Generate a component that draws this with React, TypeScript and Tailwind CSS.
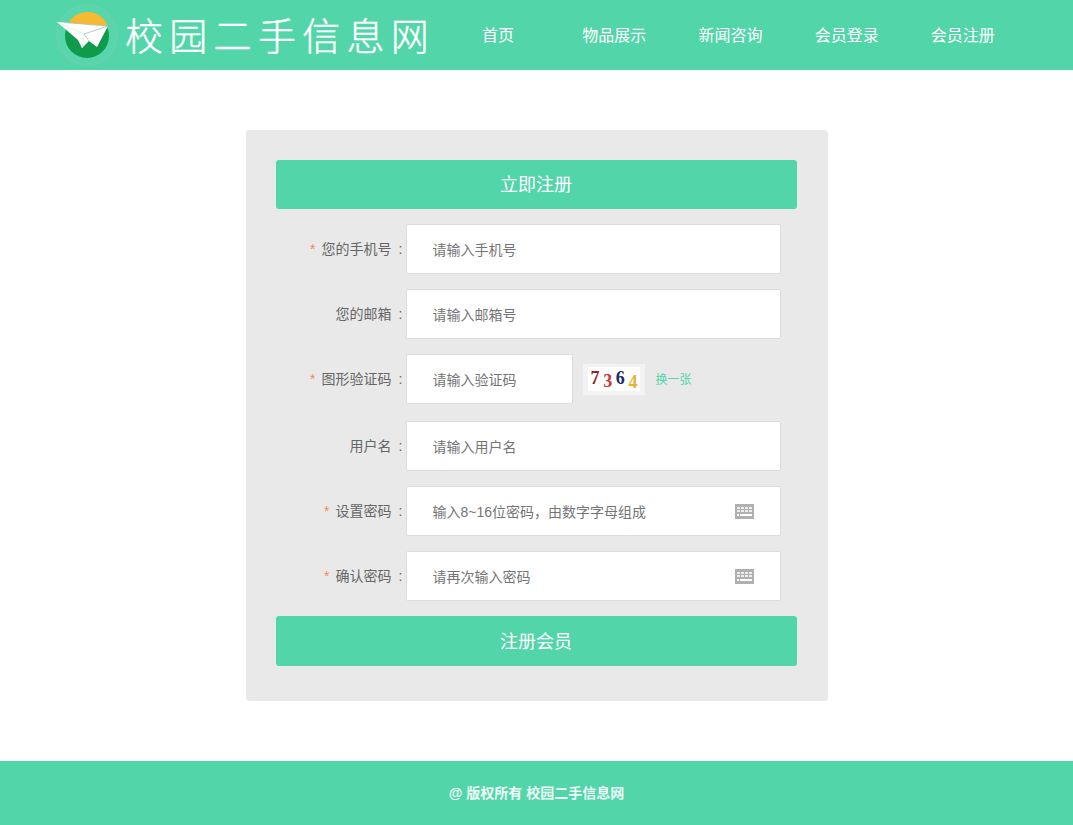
const cjk = "font-['Liberation_Sans','Noto_Sans_CJK_SC',sans-serif]";

const navItems = ["首页", "物品展示", "新闻咨询", "会员登录", "会员注册"];

function Logo() {
  return (
    <svg width="64" height="64" viewBox="0 0 64 64" className="shrink-0">
      <circle cx="33" cy="32" r="30" fill="#58d6ab" stroke="#6ccfae" strokeWidth="1.5" />
      <circle cx="33" cy="33" r="22" fill="#0f9a4c" />
      <path d="M15 19 A22 22 0 0 1 54 23 L34 30 Z" fill="#f7b92f" />
      <path d="M3 19 L54 23 L43 44 L35 38 L28 45 L24 37 Z" fill="#ffffff" />
      <path d="M14 19.8 L54 23 L30 31" stroke="#a9bfb3" strokeWidth="0.8" fill="none" />
      <path d="M3 19 L30 31 L28 45" stroke="#dfe8e3" strokeWidth="0.8" fill="none" />
      <path d="M30 31 L35 38" stroke="#a9bfb3" strokeWidth="0.8" fill="none" />
    </svg>
  );
}

function KeyboardIcon() {
  return (
    <svg width="19" height="15" viewBox="0 0 19 15" className="shrink-0">
      <rect width="19" height="15" fill="#b0b0b0" />
      <path d="M2 3h3v2H2zM6 3h3v2H6zM10 3h3v2h-3zM14 3h3v2h-3zM2 6h3v2H2zM6 6h3v2H6zM10 6h3v2h-3zM14 6h3v2h-3z" fill="#ececec" />
      <path d="M2 10h2v2H2zM5 10h12v2H5z" fill="#ffffff" />
    </svg>
  );
}

function Captcha() {
  return (
    <div className="ml-[10px] flex h-[31px] w-[62px] items-center justify-center bg-[#f3f3f3]">
      <div className="flex h-[24px] w-[52px] items-center justify-between bg-white pr-[2px] pl-[3px] font-['Liberation_Serif',serif] text-[18px] font-bold">
        <span className="mb-0.5 text-[#8c2430]">7</span>
        <span className="mt-1 text-[#c23a3a]">3</span>
        <span className="mb-0.5 text-[#1d2a6b]">6</span>
        <span className="mt-1.5 text-[#e8b030]">4</span>
      </div>
    </div>
  );
}

function Row({
  label,
  placeholder,
  required,
  keyboard,
  narrow,
  className,
  children,
}: {
  label: string;
  placeholder: string;
  required?: boolean;
  keyboard?: boolean;
  narrow?: boolean;
  className?: string;
  children?: React.ReactNode;
}) {
  return (
    <div className={`flex h-[50px] items-center ${className ?? ""}`}>
      <label className="flex w-[130px] shrink-0 items-center justify-end text-[14px] whitespace-nowrap text-[#666666]">
        {required ? <span className="mr-1.5 text-[#f58a5c]">*</span> : null}
        {label}
        <span className="w-[14px] pl-[7px]">:</span>
      </label>
      <div
        className={`flex h-[50px] items-center rounded-[2px] border border-[#dddddd] bg-white pr-[26px] pl-[26px] ${
          narrow ? "w-[167px]" : "w-[375px]"
        }`}
      >
        <input
          placeholder={placeholder}
          className="min-w-0 flex-1 bg-transparent pt-[2px] text-[14px] outline-none placeholder:text-[#757575]"
        />
        {keyboard ? <KeyboardIcon /> : null}
      </div>
      {children}
    </div>
  );
}

export default function App() {
  return (
    <div className={`min-h-[825px] bg-white ${cjk}`}>
      <header className="flex h-[70px] items-center bg-[#52d5a8] pl-[54px] text-white">
        <Logo />
        <h1 className="mt-[4px] ml-[7px] w-[315px] text-[38px] leading-none font-light tracking-[6.3px] whitespace-nowrap [-webkit-text-stroke:0.4px_#ffffff]">校园二手信息网</h1>
        <nav className="mt-[2px] flex">
          {navItems.map((item) => (
            <a key={item} className="w-[116.2px] text-center text-[16px]">
              {item}
            </a>
          ))}
        </nav>
      </header>

      <main className="mx-auto mt-[60px] h-[571px] w-[582px] rounded-[4px] bg-[#e9e9e9] pt-[30px] pl-[30px]">
        <div className="flex h-[49px] w-[521px] items-center justify-center rounded-[3px] bg-[#52d5a8] pt-[1px] text-[18px] text-white">立即注册</div>
        <div className="mt-[15px] flex flex-col gap-[15px]">
          <Row label="您的手机号" placeholder="请输入手机号" required />
          <Row label="您的邮箱" placeholder="请输入邮箱号" />
          <Row label="图形验证码" placeholder="请输入验证码" required narrow>
            <Captcha />
            <a className="mt-[2px] ml-[11px] text-[12px] text-[#52d5a8]">换一张</a>
          </Row>
          <Row label="用户名" placeholder="请输入用户名" className="mt-[2px]" />
          <Row label="设置密码" placeholder="输入8~16位密码，由数字字母组成" required keyboard />
          <Row label="确认密码" placeholder="请再次输入密码" required keyboard />
        </div>
        <button className="mt-[15px] flex h-[50px] w-[521px] items-center justify-center rounded-[3px] bg-[#52d5a8] pt-[2px] text-[18px] text-white">注册会员</button>
      </main>

      <footer className="mt-[60px] flex h-[64px] items-center justify-center bg-[#52d5a8] text-[14px] font-bold text-white/90">
        @ 版权所有 校园二手信息网
      </footer>
    </div>
  );
}
